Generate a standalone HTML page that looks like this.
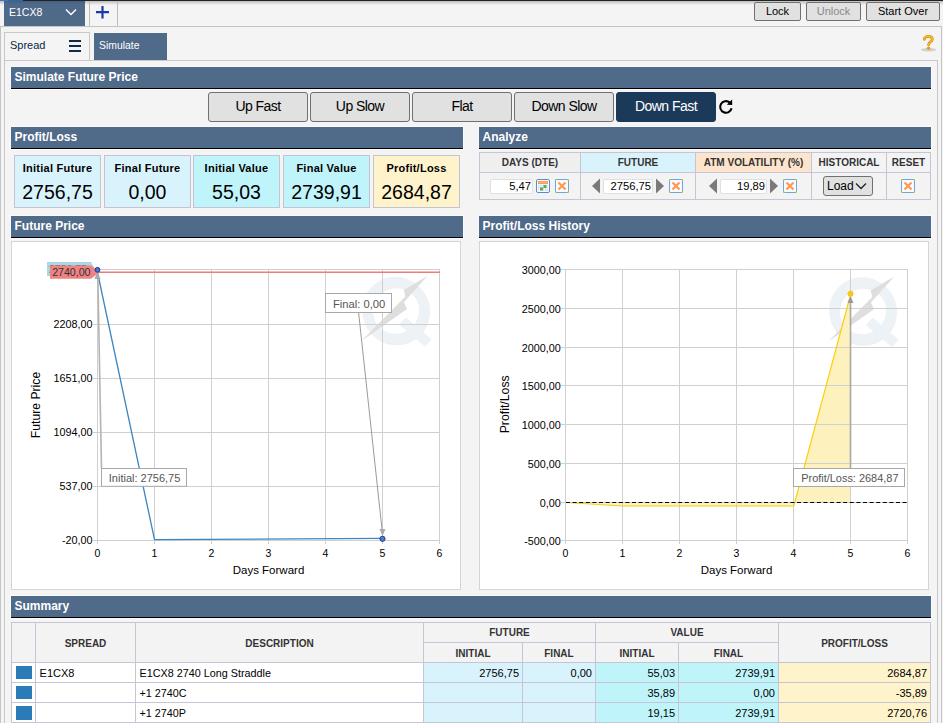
<!DOCTYPE html>
<html><head><meta charset="utf-8">
<style>
*{margin:0;padding:0;box-sizing:border-box}
html,body{width:943px;height:723px;overflow:hidden;background:#f4f4f4;font-family:"Liberation Sans",sans-serif;position:relative;color:#000}
.a{position:absolute}
.hdr{position:absolute;background:#506a89;border-bottom:1px solid #000;color:#fff;font-weight:bold;font-size:12px;line-height:20px;padding-left:3.5px;white-space:nowrap;box-shadow:0 0 0 1px #fafafa}
.btn{position:absolute;top:92px;width:100px;height:30px;border:1px solid #707070;border-radius:3px;background:#e1e1e1;font-size:14px;letter-spacing:-0.55px;line-height:27px;text-align:center}
.sbtn{position:absolute;top:2px;height:19px;border:1px solid #707070;border-radius:2px;background:#e1e1e1;font-size:11px;line-height:17px;text-align:center}
.box{position:absolute;top:155px;width:87px;height:53px;border:1px solid #c3c3d3;text-align:center}
.box .l{position:absolute;left:0;right:0;top:6px;font-size:11px;font-weight:bold;line-height:13px;letter-spacing:0.25px}
.box .v{position:absolute;left:0;right:0;top:24.8px;font-size:19.5px;line-height:22px}
.ln{position:absolute;background:#c5c5d5}
.th{position:absolute;font-size:10px;font-weight:bold;color:#333;text-align:center;white-space:nowrap}
.td{position:absolute;font-size:11px;white-space:nowrap}
.inp{position:absolute;top:179px;height:15px;background:#fff;border:1px solid #e0e0e0;border-radius:2px;font-size:11.2px;line-height:13px;text-align:right;padding-right:1px}
</style></head><body>

<!-- top strip -->
<div class="a" style="left:0;top:1px;width:943px;height:4px;background:linear-gradient(#bebebe,#c8c8c8 25%,#e0e0e0 60%,#f0f0f0)"></div>
<div class="a" style="left:0;top:0;width:943px;height:1px;background:#222"></div>
<div class="a" style="left:0;top:0;width:8px;height:1px;background:#3a78c0"></div>
<div class="a" style="left:8px;top:0;width:15px;height:1px;background:#2f66a8"></div>

<!-- tab E1CX8 -->
<div class="a" style="left:4px;top:1px;width:81px;height:25px;background:linear-gradient(#43607f,#4e6989 3px,#506a89);color:#fff;font-size:10.5px;line-height:22px;padding-left:5px">E1CX8</div>
<svg class="a" style="left:65px;top:8px" width="12" height="8"><path d="M1 1.5 L6 6.5 L11 1.5" fill="none" stroke="#fff" stroke-width="1.5"/></svg>
<div class="a" style="left:89px;top:1px;width:1px;height:25px;background:#bdbdbd"></div>
<div class="a" style="left:117px;top:1px;width:1px;height:25px;background:#bdbdbd"></div>
<svg class="a" style="left:96px;top:6px" width="13" height="13"><path d="M6.5 0 V12.5 M0 6.2 H13" stroke="#1a3aa8" stroke-width="2.2"/></svg>

<!-- top buttons -->
<div class="sbtn" style="left:754px;width:47px">Lock</div>
<div class="sbtn" style="left:806px;width:55px;color:#8a8a8a">Unlock</div>
<div class="sbtn" style="left:866px;width:74px">Start Over</div>

<!-- outer panel -->
<div class="a" style="left:0;top:26px;width:942px;height:700px;border:1px solid #c4c4c4;border-bottom:none"></div>

<!-- Spread / Simulate tabs -->
<div class="a" style="left:4px;top:32px;width:86px;height:29px;border:1px solid #c8c8c8;border-bottom:none;font-size:11px;line-height:17px;padding:4px 0 0 5px;color:#0c2848">Spread</div>
<div class="a" style="left:69px;top:40px;width:12px;height:2px;background:#0d2b4b"></div>
<div class="a" style="left:69px;top:45px;width:12px;height:2px;background:#0d2b4b"></div>
<div class="a" style="left:69px;top:50px;width:12px;height:2px;background:#0d2b4b"></div>
<div class="a" style="left:94px;top:33px;width:73px;height:27px;background:#506a89;color:#fff;font-size:10.4px;line-height:17px;padding:4px 0 0 5px">Simulate</div>

<!-- content panel -->
<div class="a" style="left:4px;top:60px;width:934px;height:680px;border:1px solid #c8c8c8;border-bottom:none"></div>

<!-- help icon -->
<svg class="a" style="left:920px;top:34px" width="16" height="18">
<ellipse cx="8.5" cy="15.8" rx="7.5" ry="1.8" fill="#b0b0b0" opacity="0.5"/>
<path d="M4.3 5.3 C4.3 1.3 12.3 1.3 12.3 5.3 C12.3 8 8.6 8 8.6 10.8" fill="none" stroke="#d08a10" stroke-width="2.8" stroke-linecap="round"/>
<path d="M4.3 5.3 C4.3 1.3 12.3 1.3 12.3 5.3 C12.3 8 8.6 8 8.6 10.8" fill="none" stroke="#ffc030" stroke-width="1.4" stroke-linecap="round"/>
<circle cx="8.6" cy="14.2" r="1.7" fill="#e0a020"/>
</svg>

<!-- headers -->
<div class="hdr" style="left:11px;top:67px;width:920px;height:22px">Simulate Future Price</div>
<div class="hdr" style="left:11px;top:127px;width:452px;height:22px">Profit/Loss</div>
<div class="hdr" style="left:479px;top:127px;width:452px;height:22px">Analyze</div>
<div class="hdr" style="left:11px;top:216px;width:452px;height:22px">Future Price</div>
<div class="hdr" style="left:479px;top:216px;width:452px;height:22px">Profit/Loss History</div>
<div class="hdr" style="left:11px;top:596px;width:920px;height:22px">Summary</div>

<!-- simulate buttons -->
<div class="btn" style="left:208px">Up Fast</div>
<div class="btn" style="left:310px">Up Slow</div>
<div class="btn" style="left:412px">Flat</div>
<div class="btn" style="left:514px">Down Slow</div>
<div class="btn" style="left:616px;background:#1b3a5a;border-color:#1b3a5a;color:#fff">Down Fast</div>
<svg class="a" style="left:714px;top:96px" width="24" height="22">
<path d="M17.6 12.3 A5.8 5.8 0 1 1 15.6 6.4" fill="none" stroke="#000" stroke-width="2.1"/>
<path d="M18.1 3.6 L18.2 9 L12.8 8.8 Z" fill="#000"/>
</svg>

<!-- P/L boxes -->
<div class="box" style="left:14px;background:#d9f3fd"><div class="l">Initial Future</div><div class="v">2756,75</div></div>
<div class="box" style="left:104px;background:#d9f3fd"><div class="l">Final Future</div><div class="v">0,00</div></div>
<div class="box" style="left:193px;background:#c0f4fb"><div class="l">Initial Value</div><div class="v">55,03</div></div>
<div class="box" style="left:283px;background:#c0f4fb"><div class="l">Final Value</div><div class="v">2739,91</div></div>
<div class="box" style="left:373px;background:#fff3cb"><div class="l">Profit/Loss</div><div class="v">2684,87</div></div>

<!--ANALYZE-->
<div class="a" style="left:479px;top:152px;width:452px;height:48px;background:#f3f3f3"></div>
<div class="a" style="left:580px;top:153px;width:115px;height:19px;background:#d9f3fd"></div>
<div class="a" style="left:695px;top:153px;width:116px;height:19px;background:#fde4cc"></div>
<div class="a" style="left:480px;top:153px;width:100px;height:19px;background:#efefef"></div>
<div class="ln" style="left:479px;top:152px;width:452px;height:1px"></div>
<div class="ln" style="left:479px;top:172px;width:452px;height:1px"></div>
<div class="ln" style="left:479px;top:199px;width:452px;height:1px"></div>
<div class="ln" style="left:479px;top:152px;width:1px;height:48px"></div>
<div class="ln" style="left:580px;top:152px;width:1px;height:48px"></div>
<div class="ln" style="left:695px;top:152px;width:1px;height:48px"></div>
<div class="ln" style="left:811px;top:152px;width:1px;height:48px"></div>
<div class="ln" style="left:886px;top:152px;width:1px;height:48px"></div>
<div class="ln" style="left:930px;top:152px;width:1px;height:48px"></div>
<div class="th" style="left:480px;top:153px;width:100px;line-height:19px">DAYS (DTE)</div>
<div class="th" style="left:581px;top:153px;width:114px;line-height:19px">FUTURE</div>
<div class="th" style="left:696px;top:153px;width:115px;line-height:19px">ATM VOLATILITY (%)</div>
<div class="th" style="left:812px;top:153px;width:74px;line-height:19px">HISTORICAL</div>
<div class="th" style="left:887px;top:153px;width:43px;line-height:19px">RESET</div>
<div class="inp" style="left:490px;width:43px">5,47</div>
<div class="inp" style="left:603px;width:50px">2756,75</div>
<div class="inp" style="left:720px;width:47px">19,89</div>
<svg class="a" style="left:536px;top:179px" width="14" height="14">
<rect x="0.5" y="0.5" width="13" height="13" rx="1.5" fill="#fff" stroke="#5a8ad0"/>
<rect x="2" y="2" width="10" height="3" fill="#ff9a55"/><rect x="2.5" y="3" width="9" height="1" fill="#ffb27a"/>
<rect x="2" y="5.5" width="10" height="6.5" fill="#d4e2f4"/>
<path d="M3 6.5h1.2v1.2H3zM5.5 6.5h1.2v1.2H5.5zM8 6.5h1.2v1.2H8zM10.5 6.5h1.2v1.2h-1.2zM3 9h1.2v1.2H3zM5.5 9h1.2v1.2H5.5zM8 9h1.2v1.2H8zM10.5 9h1.2v1.2h-1.2zM3 11h1.2v1H3zM5.5 11h1.2v1H5.5zM8 11h1.2v1H8z" fill="#fff"/>
<rect x="4" y="8.5" width="3" height="3" fill="#5aa85a"/><rect x="7.5" y="6" width="3" height="3" fill="#5aa85a"/>
</svg>
<svg class="a" style="left:555px;top:179px" width="14" height="14" id="xic">
<rect x="0.5" y="0.5" width="13" height="13" fill="#f6fbff" stroke="#74a2dc"/>
<rect x="0" y="0" width="1.5" height="1.5" fill="#b4dc30"/><rect x="12.5" y="0" width="1.5" height="1.5" fill="#b4dc30"/><rect x="0" y="12.5" width="1.5" height="1.5" fill="#b4dc30"/><rect x="12.5" y="12.5" width="1.5" height="1.5" fill="#b4dc30"/>
<path d="M3.5 3.5 L10.5 10.5 M10.5 3.5 L3.5 10.5" stroke="#ff9850" stroke-width="2.2"/>
</svg>
<svg class="a" style="left:669px;top:179px" width="14" height="14">
<rect x="0.5" y="0.5" width="13" height="13" fill="#f6fbff" stroke="#74a2dc"/>
<rect x="0" y="0" width="1.5" height="1.5" fill="#b4dc30"/><rect x="12.5" y="0" width="1.5" height="1.5" fill="#b4dc30"/><rect x="0" y="12.5" width="1.5" height="1.5" fill="#b4dc30"/><rect x="12.5" y="12.5" width="1.5" height="1.5" fill="#b4dc30"/>
<path d="M3.5 3.5 L10.5 10.5 M10.5 3.5 L3.5 10.5" stroke="#ff9850" stroke-width="2.2"/>
</svg>
<svg class="a" style="left:783px;top:179px" width="14" height="14">
<rect x="0.5" y="0.5" width="13" height="13" fill="#f6fbff" stroke="#74a2dc"/>
<rect x="0" y="0" width="1.5" height="1.5" fill="#b4dc30"/><rect x="12.5" y="0" width="1.5" height="1.5" fill="#b4dc30"/><rect x="0" y="12.5" width="1.5" height="1.5" fill="#b4dc30"/><rect x="12.5" y="12.5" width="1.5" height="1.5" fill="#b4dc30"/>
<path d="M3.5 3.5 L10.5 10.5 M10.5 3.5 L3.5 10.5" stroke="#ff9850" stroke-width="2.2"/>
</svg>
<svg class="a" style="left:901px;top:179px" width="14" height="14">
<rect x="0.5" y="0.5" width="13" height="13" fill="#f6fbff" stroke="#74a2dc"/>
<rect x="0" y="0" width="1.5" height="1.5" fill="#b4dc30"/><rect x="12.5" y="0" width="1.5" height="1.5" fill="#b4dc30"/><rect x="0" y="12.5" width="1.5" height="1.5" fill="#b4dc30"/><rect x="12.5" y="12.5" width="1.5" height="1.5" fill="#b4dc30"/>
<path d="M3.5 3.5 L10.5 10.5 M10.5 3.5 L3.5 10.5" stroke="#ff9850" stroke-width="2.2"/>
</svg>
<svg class="a" style="left:590px;top:177px" width="80" height="18">
<path d="M2 9 L10 1.5 V16.5 Z" fill="#7a7a7a"/><path d="M66 1.5 V16.5 L74 9 Z" fill="#7a7a7a"/>
</svg>
<svg class="a" style="left:707px;top:177px" width="80" height="18">
<path d="M2 9 L10 1.5 V16.5 Z" fill="#7a7a7a"/><path d="M63 1.5 V16.5 L71 9 Z" fill="#7a7a7a"/>
</svg>
<div class="a" style="left:823px;top:176px;width:50px;height:20px;border:1px solid #707070;border-radius:3px;background:#e1e1e1;font-size:12px;line-height:18px;padding-left:3px">Load</div>
<svg class="a" style="left:855px;top:182px" width="12" height="8"><path d="M1 1.5 L6 6.5 L11 1.5" fill="none" stroke="#222" stroke-width="1.3"/></svg>


<!--CHARTS-->
<svg class="a" style="left:0;top:0" width="943" height="723" font-family="Liberation Sans, sans-serif">
<defs>
<g id="wm">
<circle cx="1.2" cy="1.8" r="28.5" fill="none" stroke="#f0f0f0" stroke-width="10"/>
<circle cx="0" cy="0" r="28.5" fill="none" stroke="#edf2f6" stroke-width="9.5"/>
<path d="M7 11 L33 33" stroke="#edf2f6" stroke-width="10"/>
<path d="M32 -34 L8.4 -20 L10 -13.5 L-34 31 L11.6 -1.1 L8.6 -7.8 Z" fill="#dedede"/>
</g>
</defs>
<!-- chart 1 -->
<rect x="11.5" y="241.5" width="449" height="348" fill="#fff" stroke="#d4d4d4"/>
<use href="#wm" x="395.4" y="310"/>
<g stroke="#d0d0d0" stroke-width="1" fill="none">
<path d="M97.5 269 V544 M154.5 269 V544 M211.5 269 V544 M268.5 269 V544 M325.5 269 V544 M382.5 269 V544 M439.5 269 V544"/>
<path d="M93 540.5 H440 M93 486.5 H440 M93 432.5 H440 M93 378.5 H440 M93 324.5 H440 M93 269.5 H440"/>
</g>
<g font-size="10.8" fill="#000" text-anchor="end">
<text x="92.5" y="328">2208,00</text><text x="92.5" y="382">1651,00</text><text x="92.5" y="436">1094,00</text><text x="92.5" y="490">537,00</text><text x="92.5" y="544">-20,00</text>
</g>
<g font-size="10.5" fill="#000" text-anchor="middle">
<text x="97.5" y="557">0</text><text x="154.5" y="557">1</text><text x="211.5" y="557">2</text><text x="268.5" y="557">3</text><text x="325.5" y="557">4</text><text x="382.5" y="557">5</text><text x="439.5" y="557">6</text>
<text x="268.5" y="574" font-size="11.5">Days Forward</text>
<text transform="translate(40.3,405) rotate(-90)" font-size="12.2">Future Price</text>
</g>
<path d="M97 272.2 H440" stroke="#ee7a7a" stroke-width="1.4"/>
<path d="M47 262 H91 L95 269 L91 276 H47 Z" fill="#a9d8e6"/>
<text x="49" y="272.6" font-size="10.5" fill="#555">2756,75</text>
<path d="M50 265.5 H91 L100 272 L91 278.8 H50 Z" fill="#f08283"/>
<text x="52.2" y="275.8" font-size="10.6" fill="#333">2740,00</text>
<path d="M97 270 L154.5 539.6 L382.5 538.4" fill="none" stroke="#3a86c2" stroke-width="1.3"/>
<path d="M101.5 468 L97.8 276" stroke="#b4b4b4" stroke-width="1.6"/>
<path d="M97.5 271.5 L94.5 279 L100.5 279 Z" fill="#aaa"/>
<circle cx="97.5" cy="269.8" r="2.4" fill="#4a78c8" stroke="#1c30a0" stroke-width="1"/>
<path d="M358.6 312.6 L382.3 532" stroke="#9a9a9a" stroke-width="1"/>
<path d="M382.5 536 L379.5 529 L385.5 529 Z" fill="#aaa"/>
<circle cx="382.5" cy="538.8" r="2.6" fill="#4a80c8" stroke="#1c3aa0" stroke-width="1"/>
<rect x="101.5" y="468.5" width="85" height="17.8" fill="#fff" stroke="#a8a8a8"/>
<text x="108.8" y="481.8" font-size="11" fill="#555">Initial: 2756,75</text>
<rect x="325.5" y="293.5" width="66" height="19" fill="#fff" stroke="#a8a8a8"/>
<text x="333" y="308" font-size="11.2" fill="#555">Final: 0,00</text>

<!-- chart 2 -->
<rect x="479.5" y="241.5" width="449" height="348" fill="#fff" stroke="#d4d4d4"/>
<use href="#wm" x="862.3" y="310.4"/>
<path d="M565.5 502.5 L622.5 506 L793.8 506 L850.5 295 L850.5 502.5 Z" fill="#fdf2bd"/>
<g stroke="#d0d0d0" stroke-width="1" fill="none">
<path d="M565.5 269 V544 M622.5 269 V544 M679.5 269 V544 M736.5 269 V544 M793.5 269 V544 M850.5 269 V544 M907.5 269 V544"/>
<path d="M561 540.5 H908 M561 502.5 H908 M561 463.5 H908 M561 424.5 H908 M561 385.5 H908 M561 347.5 H908 M561 308.5 H908 M561 269.5 H908"/>
</g>
<g font-size="10.8" fill="#000" text-anchor="end">
<text x="560.8" y="274">3000,00</text><text x="560.8" y="313">2500,00</text><text x="560.8" y="352">2000,00</text><text x="560.8" y="390">1500,00</text><text x="560.8" y="429">1000,00</text><text x="560.8" y="468">500,00</text><text x="560.8" y="507">0,00</text><text x="560.8" y="545">-500,00</text>
</g>
<g font-size="10.5" fill="#000" text-anchor="middle">
<text x="565.5" y="557">0</text><text x="622.5" y="557">1</text><text x="679.5" y="557">2</text><text x="736.5" y="557">3</text><text x="793.5" y="557">4</text><text x="850.5" y="557">5</text><text x="907.5" y="557">6</text>
<text x="736.5" y="574" font-size="11.5">Days Forward</text>
<text transform="translate(508.8,404.3) rotate(-90)" font-size="12.3">Profit/Loss</text>
</g>
<path d="M565.5 502.5 L622.5 506 L793.8 506 L850.5 295" fill="none" stroke="#f8d010" stroke-width="1.2"/>
<path d="M566 502.5 H908" stroke="#000" stroke-width="1" stroke-dasharray="4,2.6"/>
<path d="M850.5 468 V301" stroke="#a8a8a8" stroke-width="1.6"/>
<path d="M850.5 296 L847.5 303 L853.5 303 Z" fill="#999"/>
<circle cx="850.5" cy="293.8" r="3" fill="#f4c81a"/>
<rect x="793.5" y="468.5" width="111" height="18" fill="#fff" stroke="#a8a8a8"/>
<text x="801.2" y="482" font-size="10.95" fill="#555">Profit/Loss: 2684,87</text>
</svg>


<!--SUMMARY-->
<div class="a" style="left:11px;top:622px;width:920px;height:40px;background:#f3f3f3"></div>
<div class="a" style="left:11px;top:662px;width:412px;height:61px;background:#fff"></div>
<div class="a" style="left:423px;top:662px;width:172px;height:61px;background:#d9f3fd"></div>
<div class="a" style="left:595px;top:662px;width:183px;height:61px;background:#c0f4fb"></div>
<div class="a" style="left:778px;top:662px;width:152px;height:61px;background:#fff3cb"></div>
<div class="ln" style="left:11px;top:622px;width:920px;height:1px"></div>
<div class="ln" style="left:423px;top:642px;width:355px;height:1px"></div>
<div class="ln" style="left:11px;top:662px;width:920px;height:1px"></div>
<div class="ln" style="left:11px;top:682px;width:920px;height:1px"></div>
<div class="ln" style="left:11px;top:702px;width:920px;height:1px"></div>
<div class="ln" style="left:11px;top:722px;width:920px;height:1px"></div>
<div class="ln" style="left:11px;top:622px;width:1px;height:101px"></div>
<div class="ln" style="left:35px;top:622px;width:1px;height:101px"></div>
<div class="ln" style="left:135px;top:622px;width:1px;height:101px"></div>
<div class="ln" style="left:423px;top:622px;width:1px;height:101px"></div>
<div class="ln" style="left:522px;top:642px;width:1px;height:81px"></div>
<div class="ln" style="left:595px;top:622px;width:1px;height:101px"></div>
<div class="ln" style="left:678px;top:642px;width:1px;height:81px"></div>
<div class="ln" style="left:778px;top:622px;width:1px;height:101px"></div>
<div class="ln" style="left:930px;top:622px;width:1px;height:101px"></div>
<div class="th" style="left:36px;top:624px;width:99px;line-height:39px">SPREAD</div>
<div class="th" style="left:136px;top:624px;width:287px;line-height:39px">DESCRIPTION</div>
<div class="th" style="left:424px;top:623px;width:171px;line-height:19px">FUTURE</div>
<div class="th" style="left:596px;top:623px;width:182px;line-height:19px">VALUE</div>
<div class="th" style="left:424px;top:644px;width:98px;line-height:19px">INITIAL</div>
<div class="th" style="left:523px;top:644px;width:72px;line-height:19px">FINAL</div>
<div class="th" style="left:596px;top:644px;width:82px;line-height:19px">INITIAL</div>
<div class="th" style="left:679px;top:644px;width:99px;line-height:19px">FINAL</div>
<div class="th" style="left:779px;top:624px;width:151px;line-height:39px">PROFIT/LOSS</div>
<div class="a" style="left:16px;top:666px;width:16px;height:13px;background:#2b7bb9"></div>
<div class="a" style="left:16px;top:686px;width:16px;height:13px;background:#2b7bb9"></div>
<div class="a" style="left:16px;top:706px;width:16px;height:14px;background:#2b7bb9"></div>
<div class="td" style="left:39.6px;top:664px;line-height:19px">E1CX8</div>
<div class="td" style="left:139.5px;font-size:10.8px;top:664px;line-height:19px">E1CX8 2740 Long Straddle</div>
<div class="td" style="left:139.5px;font-size:10.8px;top:684px;line-height:19px">+1 2740C</div>
<div class="td" style="left:139.5px;font-size:10.8px;top:704px;line-height:19px">+1 2740P</div>
<div class="td" style="left:424px;width:95px;top:664px;line-height:19px;text-align:right">2756,75</div>
<div class="td" style="left:523px;width:69px;top:664px;line-height:19px;text-align:right">0,00</div>
<div class="td" style="left:596px;width:79px;top:664px;line-height:19px;text-align:right">55,03</div>
<div class="td" style="left:596px;width:79px;top:684px;line-height:19px;text-align:right">35,89</div>
<div class="td" style="left:596px;width:79px;top:704px;line-height:19px;text-align:right">19,15</div>
<div class="td" style="left:679px;width:96px;top:664px;line-height:19px;text-align:right">2739,91</div>
<div class="td" style="left:679px;width:96px;top:684px;line-height:19px;text-align:right">0,00</div>
<div class="td" style="left:679px;width:96px;top:704px;line-height:19px;text-align:right">2739,91</div>
<div class="td" style="left:779px;width:148px;top:664px;line-height:19px;text-align:right">2684,87</div>
<div class="td" style="left:779px;width:148px;top:684px;line-height:19px;text-align:right">-35,89</div>
<div class="td" style="left:779px;width:148px;top:704px;line-height:19px;text-align:right">2720,76</div>


</body></html>
